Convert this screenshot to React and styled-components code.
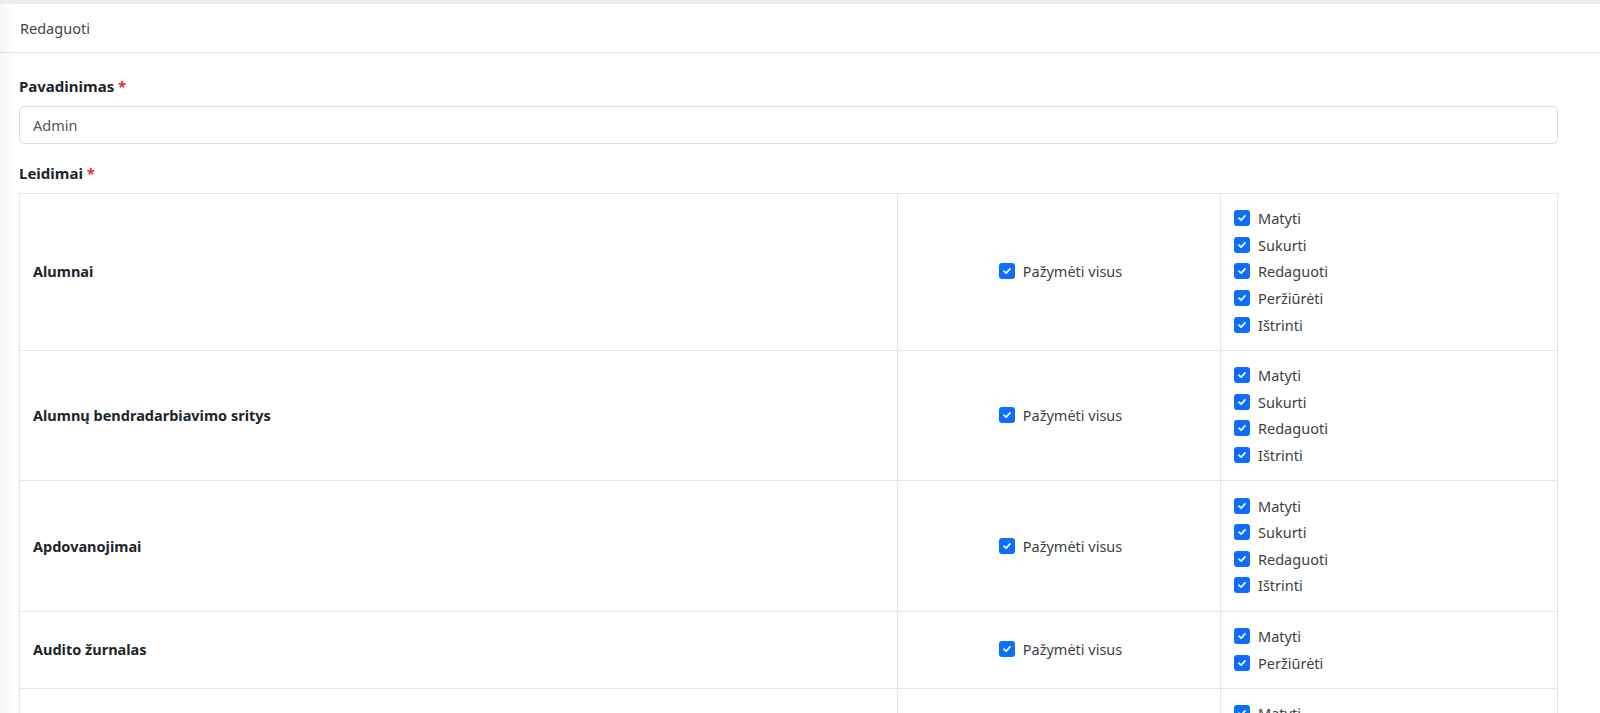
import React from 'react';
import styled, { createGlobalStyle } from 'styled-components';

const GlobalStyle = createGlobalStyle`
  html, body { margin: 0; padding: 0; background: #fff; overflow: hidden; }
  body {
    font-family: "Noto Sans", Lato, sans-serif;
    font-size: 14px;
    color: #212529;
  }
  * { box-sizing: border-box; }
`;

const Page = styled.div`
  border-top: 4px solid #ececf2;
  box-shadow: inset 14px 0 14px -10px rgba(0, 0, 0, 0.06);
  height: 713px;
  overflow: hidden;
`;

const Header = styled.div`
  height: 49px;
  display: flex;
  align-items: center;
  padding: 0 20px;
  border-bottom: 1px solid #dee2e6;
  color: #444;
  font-size: 14.5px;
`;

const Body = styled.div`
  padding: 23px 42px 0 19px;
`;

const Label = styled.label`
  display: block;
  font-weight: 700;
  font-size: 15px;
  line-height: 20px;
  color: #212529;
  margin-bottom: 10px;
  span { color: #e3342f; }
`;

const Input = styled.input`
  display: block;
  width: 100%;
  height: 38px;
  padding: 0 13px;
  border: 1px solid #d9dbde;
  border-radius: 5px;
  font: inherit;
  font-size: 14.5px;
  color: #555;
  margin-bottom: 19px;
  outline: none;
`;

const Table = styled.div`
  display: grid;
  grid-template-columns: 878px 323px 1fr;
  border-top: 1px solid #e3e5e8;
  border-left: 1px solid #e3e5e8;
`;

const Cell = styled.div`
  border-right: 1px solid #e3e5e8;
  border-bottom: 1px solid #e3e5e8;
  padding: 11px 10px 12px 13px;
  display: flex;
  flex-direction: column;
  justify-content: center;
  align-items: ${p => (p.$center ? 'center' : 'flex-start')};
`;

const Name = styled.div`
  font-weight: 700;
  font-size: 14.5px;
  color: #212529;
`;

const Check = styled.label`
  display: flex;
  align-items: center;
  gap: 8px;
  height: 26.6px;
  font-size: 14.5px;
  color: #3b3f44;
`;

const Box = styled.span`
  width: 16px;
  height: 16px;
  border-radius: 3px;
  background: #0d6efd;
  display: inline-flex;
  align-items: center;
  justify-content: center;
  flex: none;
`;

const Tick = () => (
  <Box>
    <svg width="10" height="10" viewBox="0 0 10 10">
      <path d="M2 5.2 L4.1 7.2 L8 2.9" fill="none" stroke="#fff" strokeWidth="1.7" strokeLinecap="round" strokeLinejoin="round" />
    </svg>
  </Box>
);

const rows = [
  { name: 'Alumnai', perms: ['Matyti', 'Sukurti', 'Redaguoti', 'Peržiūrėti', 'Ištrinti'] },
  { name: 'Alumnų bendradarbiavimo sritys', perms: ['Matyti', 'Sukurti', 'Redaguoti', 'Ištrinti'] },
  { name: 'Apdovanojimai', perms: ['Matyti', 'Sukurti', 'Redaguoti', 'Ištrinti'] },
  { name: 'Audito žurnalas', perms: ['Matyti', 'Peržiūrėti'] },
  { name: 'Bendradarbiavimo sritys', perms: ['Matyti', 'Sukurti', 'Redaguoti', 'Ištrinti'] },
];

export default function App() {
  return (
    <Page>
      <GlobalStyle />
      <Header>Redaguoti</Header>
      <Body>
        <Label>Pavadinimas <span>*</span></Label>
        <Input defaultValue="Admin" />
        <Label>Leidimai <span>*</span></Label>
        <Table>
          {rows.map(r => (
            <React.Fragment key={r.name}>
              <Cell><Name>{r.name}</Name></Cell>
              <Cell $center>
                <Check><Tick />Pažymėti visus</Check>
              </Cell>
              <Cell>
                {r.perms.map(p => (
                  <Check key={p}><Tick />{p}</Check>
                ))}
              </Cell>
            </React.Fragment>
          ))}
        </Table>
      </Body>
    </Page>
  );
}
